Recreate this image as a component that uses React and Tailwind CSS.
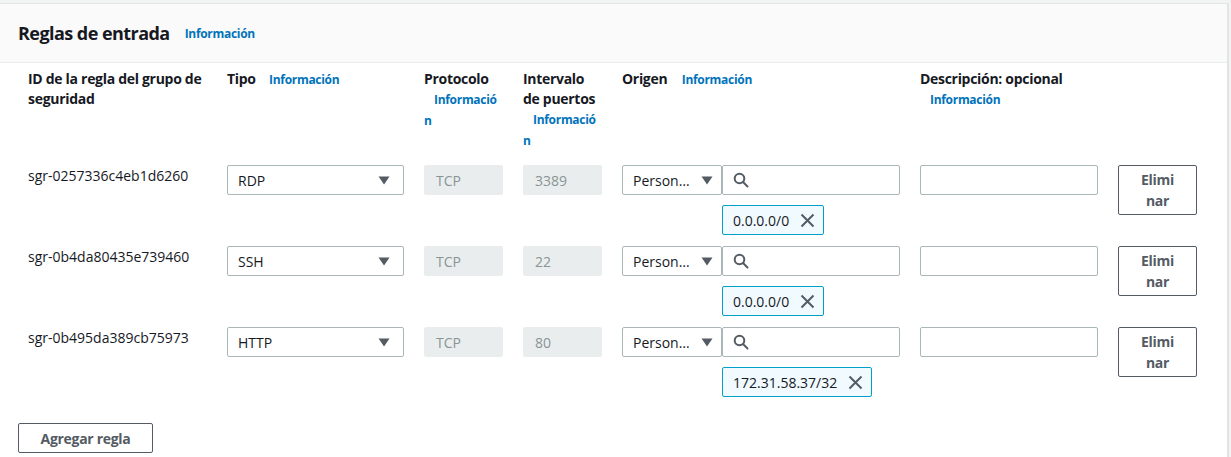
import React from "react";

const rules = [
  { id: "sgr-0257336c4eb1d6260", type: "RDP", port: "3389", cidr: "0.0.0.0/0" },
  { id: "sgr-0b4da80435e739460", type: "SSH", port: "22", cidr: "0.0.0.0/0" },
  { id: "sgr-0b495da389cb75973", type: "HTTP", port: "80", cidr: "172.31.58.37/32" },
];

function Info({ className = "" }) {
  return (
    <span className={"ml-[10px] text-[12px] font-bold tracking-[-0.3px] text-[#0073bb] " + className}>
      Información
    </span>
  );
}

function Caret() {
  return (
    <svg width="12" height="9" viewBox="0 0 12 9" className="shrink-0">
      <path d="M0.5 0.5h11L6 8.5z" fill="#545b64" />
    </svg>
  );
}

function SearchIcon() {
  return (
    <svg width="16" height="16" viewBox="0 0 16 16" fill="none">
      <circle cx="6.5" cy="6.5" r="4.8" stroke="#545b64" strokeWidth="2" />
      <path d="M10 10l4.5 4.5" stroke="#545b64" strokeWidth="2" strokeLinecap="round" />
    </svg>
  );
}

function CloseIcon() {
  return (
    <svg width="15" height="15" viewBox="0 0 15 15" fill="none">
      <path d="M1.5 1.5l12 12M13.5 1.5l-12 12" stroke="#545b64" strokeWidth="2" />
    </svg>
  );
}

function Row({ rule }) {
  return (
    <>
      <div className="pt-[1px] leading-[20px] text-[#16191f]">{rule.id}</div>
      <div className="flex h-[30px] items-center justify-between rounded-[2px] border border-[#aab7b8] bg-white pl-[10px] pr-[13px] text-[#16191f]">
        <span>{rule.type}</span>
        <Caret />
      </div>
      <div className="flex h-[30px] items-center rounded-[2px] bg-[#eaeded] px-[12px] text-[#879596]">
        TCP
      </div>
      <div className="flex h-[30px] items-center rounded-[2px] bg-[#eaeded] px-[12px] text-[#879596]">
        {rule.port}
      </div>
      <div className="flex flex-col">
        <div className="flex">
          <div className="flex h-[30px] w-[100px] shrink-0 items-center justify-between rounded-[2px] border border-[#aab7b8] bg-white pl-[10px] pr-[8px] text-[#16191f]">
            <span>Person…</span>
            <Caret />
          </div>
          <div className="flex h-[30px] flex-1 items-center rounded-[2px] border border-[#aab7b8] bg-white pl-[10px]">
            <SearchIcon />
          </div>
        </div>
        <div className="ml-[100px] mt-[10px] flex">
          <div className="flex h-[30px] items-center gap-[11px] rounded-[2px] border border-[#00a1c9] bg-[#f1faff] pl-[10px] pr-[8px] text-[#16191f]">
            <span>{rule.cidr}</span>
            <CloseIcon />
          </div>
        </div>
      </div>
      <div className="h-[30px] rounded-[2px] border border-[#aab7b8] bg-white" />
      <div className="flex h-[50px] items-center justify-center rounded-[2px] border border-[#545b64] bg-white px-[20px] text-center font-bold leading-[21px] tracking-[-0.3px] text-[#545b64] break-all">
        Eliminar
      </div>
    </>
  );
}

export default function App() {
  return (
    <div
      className="min-h-screen bg-[#f2f3f3] pr-[2px] pt-[3px] text-[14px]"
      style={{ fontFamily: '"Open Sans", "Noto Sans", Arial, sans-serif' }}
    >
      <div className="min-h-[460px] border-r-2 border-t border-[#e3e5e5] bg-white">
        <div className="flex h-[59px] items-center border-b border-[#eaeded] bg-[#fafafa] pl-[18px]">
          <h2 className="text-[18px] font-bold tracking-[-0.55px] text-[#16191f]">Reglas de entrada</h2>
          <span className="ml-[15px] mt-[2px] text-[12px] font-bold tracking-[-0.3px] text-[#0073bb]">Información</span>
        </div>
        <div className="pl-[28px] pt-[6px]">
          <div className="grid grid-cols-[179px_177px_79px_79px_278px_178px_79px] gap-x-5 font-bold leading-[20px] tracking-[-0.3px] text-[#16191f]">
            <div>ID de la regla del grupo de seguridad</div>
            <div>
              Tipo <Info />
            </div>
            <div className="break-words">
              Protocolo <Info />
            </div>
            <div className="break-words">
              Intervalo de puertos <Info />
            </div>
            <div>
              Origen <Info className="ml-[11px]" />
            </div>
            <div className="break-words">
              Descripción: opcional <Info />
            </div>
            <div />
          </div>
          <div className="mt-[14px] grid grid-cols-[179px_177px_79px_79px_278px_178px_79px] items-start gap-x-5 gap-y-[11px]">
            {rules.map((r) => (
              <Row key={r.id} rule={r} />
            ))}
          </div>
        </div>
        <div className="pl-[18px] pt-[26px]">
          <button className="h-[30px] w-[135px] rounded-[2px] border border-[#545b64] bg-white font-bold tracking-[-0.3px] text-[#545b64]">
            Agregar regla
          </button>
        </div>
      </div>
    </div>
  );
}
